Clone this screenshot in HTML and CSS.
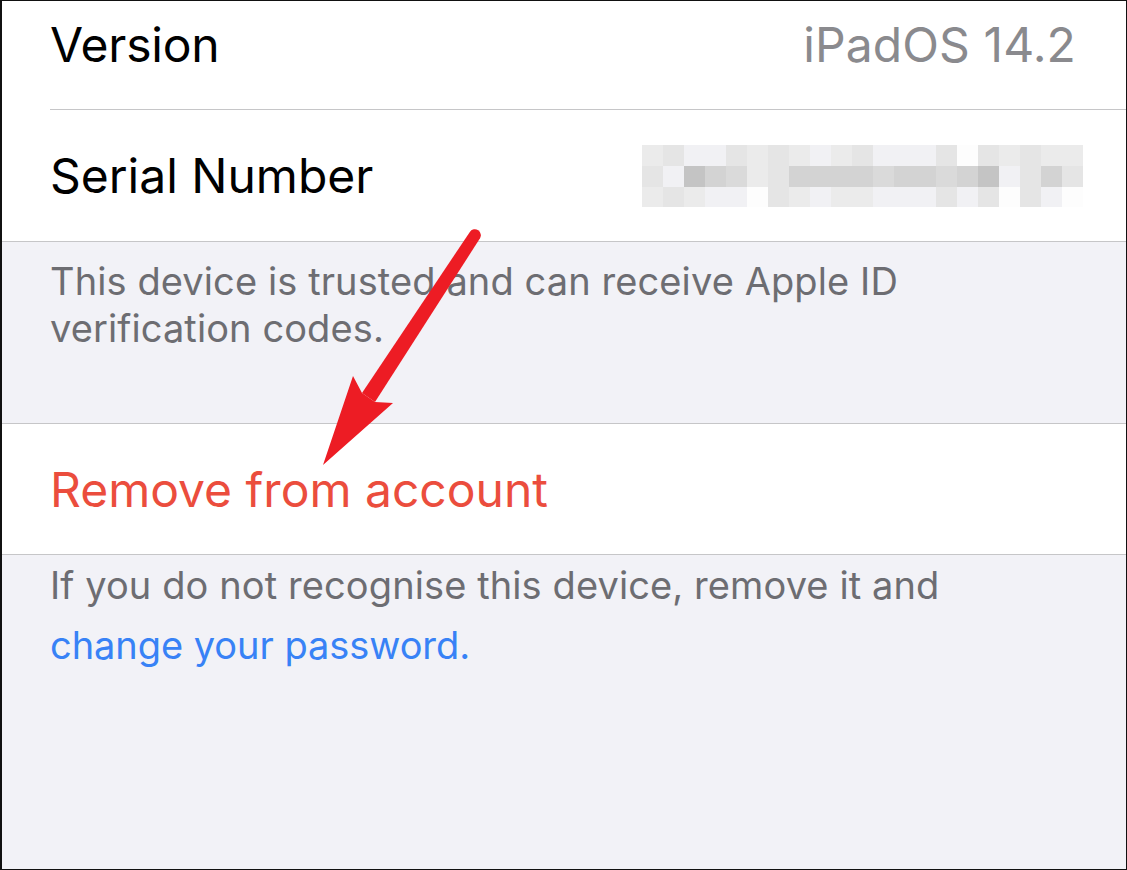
FILE: index.html
```html
<!DOCTYPE html>
<html lang="en">
<head>
    <meta charset="UTF-8">
    <meta name="viewport" content="width=device-width, initial-scale=1.0">
    <title>Device Details</title>
    <link rel="stylesheet" href="styles.css">
</head>
<body>
    <div class="screen">
        <div class="group">
            <div class="row row-first">
                <span class="label">Version</span>
                <span class="value">iPadOS 14.2</span>
            </div>
            <div class="row row-last">
                <span class="label">Serial Number</span>
                <!-- serial number is pixelated in the screenshot -->
                <div class="pixels">
                    <span class="c"></span><span class="d"></span><span class="c"></span>
                    <span class="d"></span><span class="b"></span><span class="d"></span>
                    <span class="b"></span><span class="g"></span><span class="c"></span>
                    <span class="b"></span><span class="f"></span><span class="b"></span>
                    <span class="d"></span><span class="e"></span><span class="b"></span>
                    <span class="c"></span><span class="c"></span><span class="w"></span>
                    <span class="d"></span><span class="d"></span><span class="d"></span>
                    <span class="c"></span><span class="f"></span><span class="c"></span>
                    <span class="b"></span><span class="f"></span><span class="b"></span>
                    <span class="c"></span><span class="f"></span><span class="c"></span>
                    <span class="d"></span><span class="f"></span><span class="c"></span>
                    <span class="b"></span><span class="e"></span><span class="b"></span>
                    <span class="b"></span><span class="f"></span><span class="b"></span>
                    <span class="b"></span><span class="f"></span><span class="b"></span>
                    <span class="d"></span><span class="e"></span><span class="d"></span>
                    <span class="w"></span><span class="f"></span><span class="b"></span>
                    <span class="d"></span><span class="g"></span><span class="d"></span>
                    <span class="c"></span><span class="b"></span><span class="w"></span>
                    <span class="d"></span><span class="d"></span><span class="d"></span>
                    <span class="c"></span><span class="f"></span><span class="b"></span>
                    <span class="c"></span><span class="d"></span><span class="w"></span>
                </div>
            </div>
        </div>

        <div class="footer footer-trusted">
            <p>This device is trusted and can receive Apple ID verification codes.</p>
        </div>

        <div class="group">
            <div class="row row-action">
                <span class="action">Remove from account</span>
            </div>
        </div>

        <div class="footer footer-remove">
            <p>If you do not recognise this device, remove it and</p>
            <a class="link" href="#">change your password.</a>
        </div>

        <!-- annotation arrow drawn over the screenshot -->
        <svg class="arrow" width="1127" height="870" viewBox="0 0 1127 870">
            <path d="M 470 231.7 A 6 6 0 0 1 480 238.3 L 375 402 L 362 393 Z" fill="#ed1c24"/>
            <polygon points="353,376 362,393 375,402 393,403 323,465" fill="#ed1c24"/>
        </svg>
    </div>
</body>
</html>
```

FILE: styles.css
```css
* { box-sizing: border-box; }
body { margin: 0; font-family: Inter, "Noto Sans", sans-serif; }
.screen { position: relative; width: 1127px; height: 870px; overflow: hidden; background: #f2f2f7; border: 1px solid #111; border-left-width: 2px; }

.group { background: #fff; }
.group + .footer { border-top: 1px solid #c6c6c8; }
.footer + .group { border-top: 1px solid #c6c6c8; }

.row { display: flex; align-items: center; padding: 0 50px 0 48px; font-size: 48px; color: #000; }
.row-first { height: 131px; margin-top: -22px; border-bottom: 1px solid #c6c6c8; margin-left: 48px; padding-left: 0; letter-spacing: -0.2px; }
.row-last { height: 131px; }
.row-action { height: 130px; }
.value { margin-left: auto; color: #8a8a8e; letter-spacing: 0.1px; }
.action { color: #eb4d3d; }

.pixels { margin-left: auto; margin-right: -7px; display: grid; grid-auto-flow: column; grid-template-rows: 21px 21px 20px; grid-auto-columns: 21px; }
.pixels .w { background: #fdfdfd; }
.pixels .b { background: #f1f1f4; }
.pixels .c { background: #ebebeb; }
.pixels .d { background: #e5e5e5; }
.pixels .e { background: #dadada; }
.pixels .f { background: #d3d3d3; }
.pixels .g { background: #c4c4c4; }

.footer { padding: 0 40px 0 48px; font-size: 38px; line-height: 47px; color: #6d6d72; letter-spacing: 0.1px; }
.footer p { margin: 0; }
.footer-trusted { height: 182px; padding-top: 16px; }
.footer-remove { padding-top: 7px; }
.link { display: block; margin-top: 13px; color: #3882f6; text-decoration: none; letter-spacing: -0.05px; }

.arrow { position: absolute; left: -2px; top: -1px; pointer-events: none; }
```
